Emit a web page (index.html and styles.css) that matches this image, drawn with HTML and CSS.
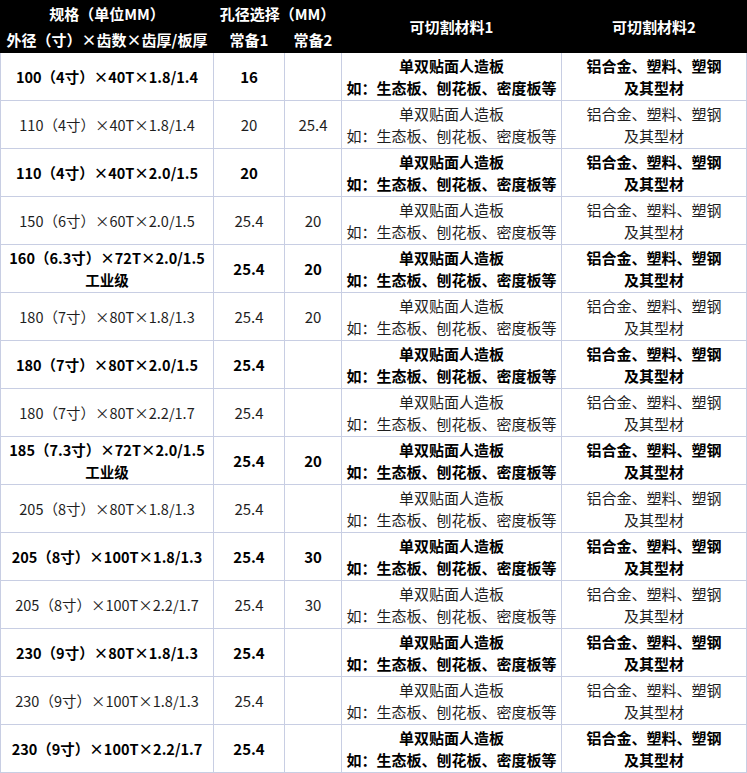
FILE: index.html
```html
<!DOCTYPE html>
<html lang="zh">
<head>
<meta charset="utf-8">
<link rel="stylesheet" href="styles.css">
</head>
<body>
<table class="spec">
  <colgroup>
    <col class="c1"><col class="c2"><col class="c3"><col class="c4"><col class="c5">
  </colgroup>
  <thead>
    <tr class="h1">
      <th>规格（单位MM）</th>
      <th colspan="2">孔径选择（MM）</th>
      <th rowspan="2">可切割材料1</th>
      <th rowspan="2">可切割材料2</th>
    </tr>
    <tr class="h2">
      <th>外径（寸）×齿数×齿厚/板厚</th>
      <th>常备1</th>
      <th>常备2</th>
    </tr>
  </thead>
  <tbody>
    <tr class="b"><td class="spec-name">100（4寸）×40T×1.8/1.4</td><td>16</td><td></td><td>单双贴面人造板<br>如：生态板、刨花板、密度板等</td><td>铝合金、塑料、塑钢<br>及其型材</td></tr>
    <tr class="n"><td class="spec-name">110（4寸）×40T×1.8/1.4</td><td>20</td><td>25.4</td><td>单双贴面人造板<br>如：生态板、刨花板、密度板等</td><td>铝合金、塑料、塑钢<br>及其型材</td></tr>
    <tr class="b"><td class="spec-name">110（4寸）×40T×2.0/1.5</td><td>20</td><td></td><td>单双贴面人造板<br>如：生态板、刨花板、密度板等</td><td>铝合金、塑料、塑钢<br>及其型材</td></tr>
    <tr class="n"><td class="spec-name">150（6寸）×60T×2.0/1.5</td><td>25.4</td><td>20</td><td>单双贴面人造板<br>如：生态板、刨花板、密度板等</td><td>铝合金、塑料、塑钢<br>及其型材</td></tr>
    <tr class="b"><td class="spec-name">160（6.3寸）×72T×2.0/1.5<br>工业级</td><td>25.4</td><td>20</td><td>单双贴面人造板<br>如：生态板、刨花板、密度板等</td><td>铝合金、塑料、塑钢<br>及其型材</td></tr>
    <tr class="n"><td class="spec-name">180（7寸）×80T×1.8/1.3</td><td>25.4</td><td>20</td><td>单双贴面人造板<br>如：生态板、刨花板、密度板等</td><td>铝合金、塑料、塑钢<br>及其型材</td></tr>
    <tr class="b"><td class="spec-name">180（7寸）×80T×2.0/1.5</td><td>25.4</td><td></td><td>单双贴面人造板<br>如：生态板、刨花板、密度板等</td><td>铝合金、塑料、塑钢<br>及其型材</td></tr>
    <tr class="n"><td class="spec-name">180（7寸）×80T×2.2/1.7</td><td>25.4</td><td></td><td>单双贴面人造板<br>如：生态板、刨花板、密度板等</td><td>铝合金、塑料、塑钢<br>及其型材</td></tr>
    <tr class="b"><td class="spec-name">185（7.3寸）×72T×2.0/1.5<br>工业级</td><td>25.4</td><td>20</td><td>单双贴面人造板<br>如：生态板、刨花板、密度板等</td><td>铝合金、塑料、塑钢<br>及其型材</td></tr>
    <tr class="n"><td class="spec-name">205（8寸）×80T×1.8/1.3</td><td>25.4</td><td></td><td>单双贴面人造板<br>如：生态板、刨花板、密度板等</td><td>铝合金、塑料、塑钢<br>及其型材</td></tr>
    <tr class="b"><td class="spec-name">205（8寸）×100T×1.8/1.3</td><td>25.4</td><td>30</td><td>单双贴面人造板<br>如：生态板、刨花板、密度板等</td><td>铝合金、塑料、塑钢<br>及其型材</td></tr>
    <tr class="n"><td class="spec-name">205（8寸）×100T×2.2/1.7</td><td>25.4</td><td>30</td><td>单双贴面人造板<br>如：生态板、刨花板、密度板等</td><td>铝合金、塑料、塑钢<br>及其型材</td></tr>
    <tr class="b"><td class="spec-name">230（9寸）×80T×1.8/1.3</td><td>25.4</td><td></td><td>单双贴面人造板<br>如：生态板、刨花板、密度板等</td><td>铝合金、塑料、塑钢<br>及其型材</td></tr>
    <tr class="n"><td class="spec-name">230（9寸）×100T×1.8/1.3</td><td>25.4</td><td></td><td>单双贴面人造板<br>如：生态板、刨花板、密度板等</td><td>铝合金、塑料、塑钢<br>及其型材</td></tr>
    <tr class="b"><td class="spec-name">230（9寸）×100T×2.2/1.7</td><td>25.4</td><td></td><td>单双贴面人造板<br>如：生态板、刨花板、密度板等</td><td>铝合金、塑料、塑钢<br>及其型材</td></tr>
  </tbody>
</table>
</body>
</html>
```

FILE: styles.css
```css
html, body {
  margin: 0;
  padding: 0;
  background: #fff;
}

.spec {
  border-collapse: collapse;
  table-layout: fixed;
  width: 746px;
  font-family: "Noto Sans CJK SC", "Noto Sans", sans-serif;
  font-size: 15px;
  line-height: 22px;
  text-align: center;
}

.c1 { width: 213px; }
.c2 { width: 71px; }
.c3 { width: 57px; }
.c4 { width: 220px; }
.c5 { width: 185px; }

.spec th {
  background: #000;
  color: #fff;
  font-weight: bold;
  border: 1px solid #000;
  padding: 0;
  height: 25px;
  vertical-align: middle;
}

.spec td {
  border: 1px solid #c8cee3;
  padding: 0;
  height: 47px;
  vertical-align: middle;
  color: #1e1e1e;
}

.spec td.spec-name {
  font-size: 14.5px;
}

.spec tr.b td {
  font-weight: bold;
  color: #000;
}
```
